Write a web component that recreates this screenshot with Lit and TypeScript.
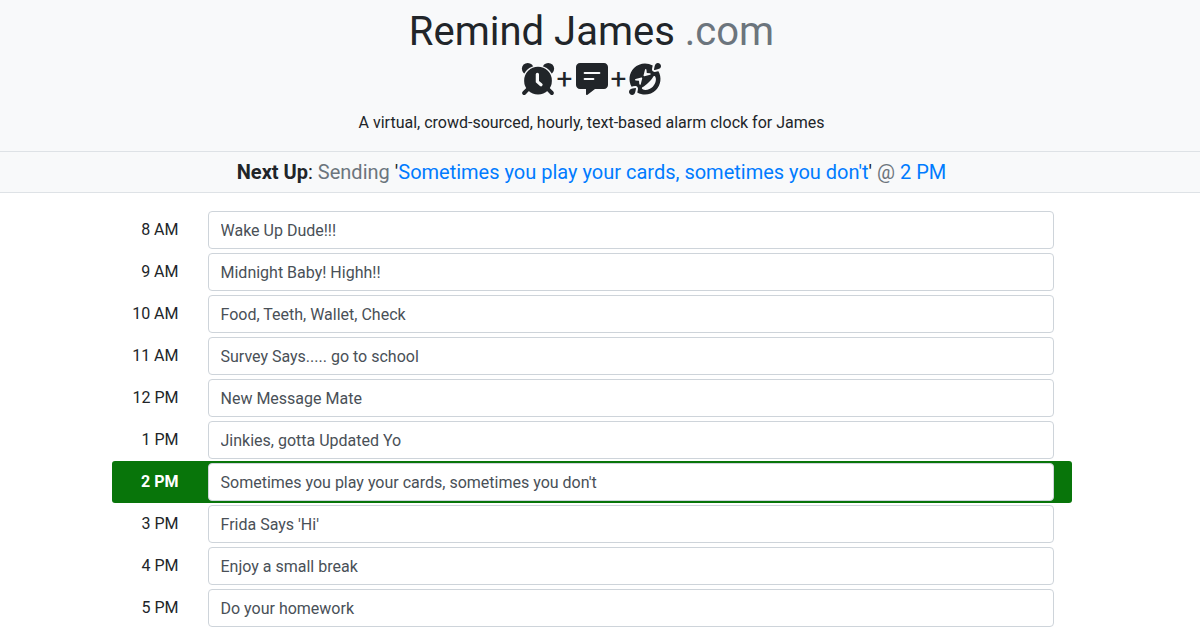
import { LitElement, html, css } from "lit";
import { customElement, property } from "lit/decorators.js";

interface Reminder {
  hour: string;
  text: string;
}

@customElement("app-root")
export class AppRoot extends LitElement {
  @property({ type: Number }) next = 6;

  reminders: Reminder[] = [
    { hour: "8 AM", text: "Wake Up Dude!!!" },
    { hour: "9 AM", text: "Midnight Baby! Highh!!" },
    { hour: "10 AM", text: "Food, Teeth, Wallet, Check" },
    { hour: "11 AM", text: "Survey Says..... go to school" },
    { hour: "12 PM", text: "New Message Mate" },
    { hour: "1 PM", text: "Jinkies, gotta Updated Yo" },
    { hour: "2 PM", text: "Sometimes you play your cards, sometimes you don't" },
    { hour: "3 PM", text: "Frida Says 'Hi'" },
    { hour: "4 PM", text: "Enjoy a small break" },
    { hour: "5 PM", text: "Do your homework" },
  ];

  static styles = css`
    :host {
      display: block;
      font-family: Roboto, "Liberation Sans", sans-serif;
      font-size: 16px;
      line-height: 24px;
      color: #212529;
      background: #fff;
    }
    * {
      box-sizing: border-box;
    }
    .hero,
    .next {
      padding-right: 17px;
      background: #f8f9fa;
      border-bottom: 1px solid #dee2e6;
      text-align: center;
    }
    .hero {
      padding-top: 8px;
      padding-bottom: 16px;
    }
    .title {
      margin: 0;
      font-size: 40px;
      line-height: 48px;
      font-weight: 400;
    }
    .muted {
      color: #6c757d;
    }
    .icons {
      display: flex;
      justify-content: center;
      align-items: center;
      gap: 3px;
      height: 46px;
      font-size: 28px;
      line-height: 34px;
    }
    .icon {
      width: 32px;
      height: 32px;
      overflow: visible;
      fill: currentColor;
    }
    .gap {
      fill: #f8f9fa;
    }
    .hands {
      fill: none;
      stroke: #f8f9fa;
      stroke-width: 52;
      stroke-linecap: round;
      stroke-linejoin: round;
    }
    .lines {
      fill: none;
      stroke: #f8f9fa;
      stroke-width: 32;
      stroke-linecap: round;
    }
    .leg {
      stroke: currentColor;
      stroke-width: 64;
      stroke-linecap: round;
    }
    .lead {
      margin: 9px 0 0;
    }
    .next {
      padding-top: 5px;
      padding-bottom: 5px;
      font-size: 20px;
      line-height: 30px;
    }
    .strong {
      font-weight: 700;
    }
    .link {
      color: #007bff;
      text-decoration: none;
    }
    .schedule {
      padding: 16px 17px 16px 0;
    }
    .list {
      max-width: 960px;
      margin: 0 auto;
    }
    .row {
      display: grid;
      grid-template-columns: 67px 1fr;
      column-gap: 29px;
      padding: 2px 18px 2px 0;
      border-radius: 3px;
    }
    .hour {
      padding-top: 7px;
      text-align: right;
    }
    .message {
      display: block;
      width: 100%;
      height: 38px;
      padding: 6px 12px;
      border: 1px solid #ced4da;
      border-radius: 4px;
      background: #fff;
      color: #495057;
      font: inherit;
      font-weight: 400;
    }
    .current {
      background: #08750a;
    }
    .current .hour {
      color: #fff;
      font-weight: 700;
    }
  `;

  render() {
    const upcoming = this.reminders[this.next];
    return html`
      <header class="hero">
        <h1 class="title">Remind James <span class="muted">.com</span></h1>
        <div class="icons">
          <svg class="icon" viewBox="0 0 512 512" aria-hidden="true">
            <circle cx="92" cy="92" r="94" />
            <circle cx="420" cy="92" r="94" />
            <circle class="gap" cx="256" cy="288" r="250" />
            <circle cx="256" cy="282" r="222" />
            <path class="leg" d="M100 414L34 480M412 414L478 480" />
            <path class="hands" d="M246 180V298L304 348" />
          </svg>
          <span>+</span>
          <svg class="icon" viewBox="0 0 512 512" aria-hidden="true">
            <path d="M448 0H64C28 0 0 28 0 64V352C0 388 28 416 64 416H160V500C160 510 171 516 179 510L304 416H448C484 416 512 388 512 352V64C512 28 484 0 448 0Z" />
            <path class="lines" d="M138 160H374M138 256H278" />
          </svg>
          <span>+</span>
          <svg class="icon" viewBox="0 0 512 512" aria-hidden="true">
            <path d="M409.6 111.9c22.6-3.2 73.5-12 88.3-26.8 19.2-19.2 18.9-50.6-.7-70.2S446-5 426.9 14.2c-14.8 14.8-23.5 65.7-26.8 88.3-.8 5.5 3.9 10.2 9.5 9.4zM102.4 400.1c-22.6 3.2-73.5 12-88.3 26.8-19.1 19.1-18.8 50.6.8 70.2s51 19.9 70.2.7c14.8-14.8 23.5-65.7 26.8-88.3.8-5.5-3.9-10.2-9.5-9.4zm311.7-256.5c-33 3.9-48.6-25.1-45.7-45.7 3.4-24 7.4-42.1 11.5-56.5C285.1-13.4 161.9-.5 80.6 80.6-.5 161.7-13.4 285 41.4 379.9c14.4-4.1 32.4-8 56.5-11.5 33.2-3.9 48.6 25.2 45.7 45.7-3.4 24-7.4 42.1-11.5 56.5 94.8 54.8 218.1 41.9 299.3-39.2s94-204.4 39.2-299.3c-14.4 4.1-32.5 8-56.5 11.5zM255.7 106c3.3-13.2 22.4-11.5 23.6 1.8l4.8 52.3 52.3 4.8c13.4 1.2 14.9 20.3 1.8 23.6l-90.5 22.6c-8.9 2.2-16.7-5.9-14.5-14.5l22.5-90.6zm-90.9 230.3L160 284l-52.3-4.8c-13.4-1.2-14.9-20.3-1.8-23.6l90.5-22.6c8.8-2.2 16.7 5.8 14.5 14.5L188.3 338c-3.1 13.2-22.2 11.7-23.5-1.7zm215.7 44.2c-29.3 29.3-75.7 50.4-116.7 50.4-18.9 0-36.6-4.5-51-14.7-9.8-6.9-8.7-21.8 2-27.2 28.3-14.6 63.9-42.4 97.8-76.3s61.7-69.6 76.3-97.8c5.4-10.5 20.2-11.9 27.3-2 32.3 45.3 7.1 124.7-35.7 167.6z" />
          </svg>
        </div>
        <p class="lead">A virtual, crowd-sourced, hourly, text-based alarm clock for James</p>
      </header>
      <div class="next">
        <span class="strong">Next Up</span>: <span class="muted">Sending</span>
        '<a class="link" href="#slot-${this.next}">${upcoming.text}</a>'
        <span class="muted">@</span>
        <a class="link" href="#slot-${this.next}">${upcoming.hour}</a>
      </div>
      <main class="schedule">
        <div class="list">
          ${this.reminders.map(
            (r, i) => html`
              <div class="row ${i === this.next ? "current" : ""}">
                <label class="hour" for="slot-${i}">${r.hour}</label>
                <input class="message" id="slot-${i}" type="text" .value=${r.text} />
              </div>
            `
          )}
        </div>
      </main>
    `;
  }
}
